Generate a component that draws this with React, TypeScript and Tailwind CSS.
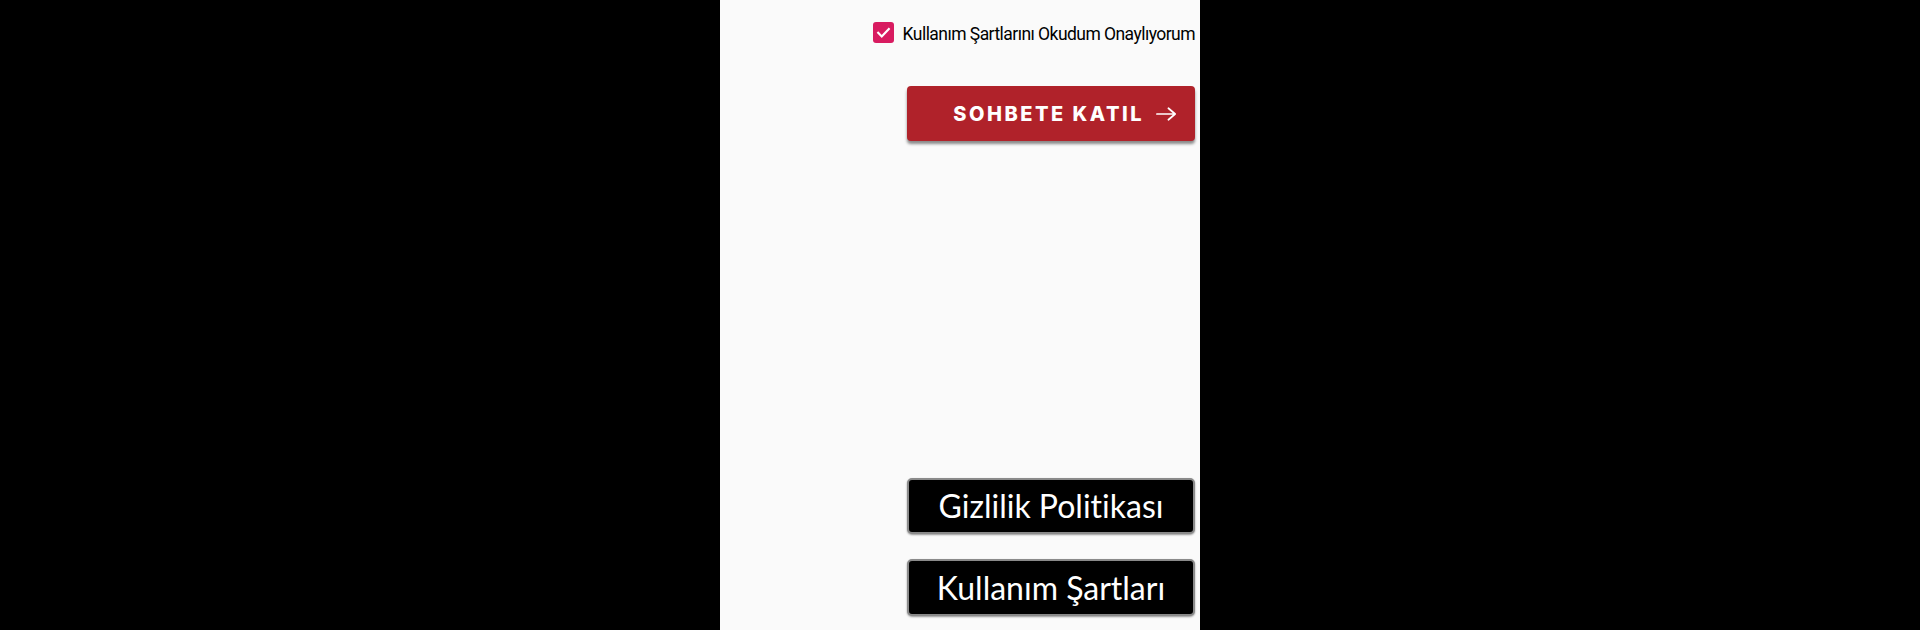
export default function App() {
  return (
    <div className="w-[1920px] h-[630px] bg-black flex justify-center overflow-hidden">
      <div className="w-[480px] h-full bg-[#fafafa] flex flex-col items-end pr-[5px]">
        <label className="mt-[20px] flex items-center gap-[9px]">
          <span className="w-[21px] h-[21px] rounded-[3px] bg-[#d81b60] flex items-center justify-center">
            <svg viewBox="0 0 24 24" className="w-[17px] h-[17px]" fill="none" stroke="white" strokeWidth="3" strokeLinecap="square">
              <path d="M4.5 12.5l5 5L19.5 7" />
            </svg>
          </span>
          <span className="pt-[4px] text-[17.5px] leading-[21px] text-black tracking-[-0.55px]" style={{ fontFamily: "Roboto, sans-serif" }}>
            Kullanım Şartlarını Okudum Onaylıyorum
          </span>
        </label>
        <button className="mt-[41px] w-[288px] h-[55px] rounded-[4px] bg-[#b0222a] flex items-center justify-end pr-[17px] gap-[11px] shadow-[0_3px_3px_rgba(0,0,0,0.45)]">
          <span className="text-white text-[20px] font-extrabold tracking-[2.5px]" style={{ fontFamily: "Inter, 'Noto Sans', sans-serif" }}>
            SOHBETE KATIL
          </span>
          <svg viewBox="0 0 24 16" className="w-[23px] h-[16px]" fill="none" stroke="white" strokeWidth="1.8" strokeLinecap="round" strokeLinejoin="round">
            <path d="M2 8h19M14 2l7 6-7 6" />
          </svg>
        </button>
        <button className="mt-[337px] w-[288px] h-[56px] rounded-[5px] bg-black border-[2px] border-[#8a8a8a] flex items-center justify-center shadow-[0_1px_2px_rgba(0,0,0,0.4)]">
          <span className="text-white text-[32px] leading-none [font-variant-ligatures:none]" style={{ fontFamily: "Lato, sans-serif" }}>
            Gizlilik Politikası
          </span>
        </button>
        <button className="mt-[25px] w-[288px] h-[57px] rounded-[5px] bg-black border-[2px] border-[#8a8a8a] flex items-center justify-center shadow-[0_1px_2px_rgba(0,0,0,0.4)]">
          <span className="text-white text-[32px] leading-none [font-variant-ligatures:none]" style={{ fontFamily: "Lato, sans-serif" }}>
            Kullanım Şartları
          </span>
        </button>
      </div>
    </div>
  );
}
